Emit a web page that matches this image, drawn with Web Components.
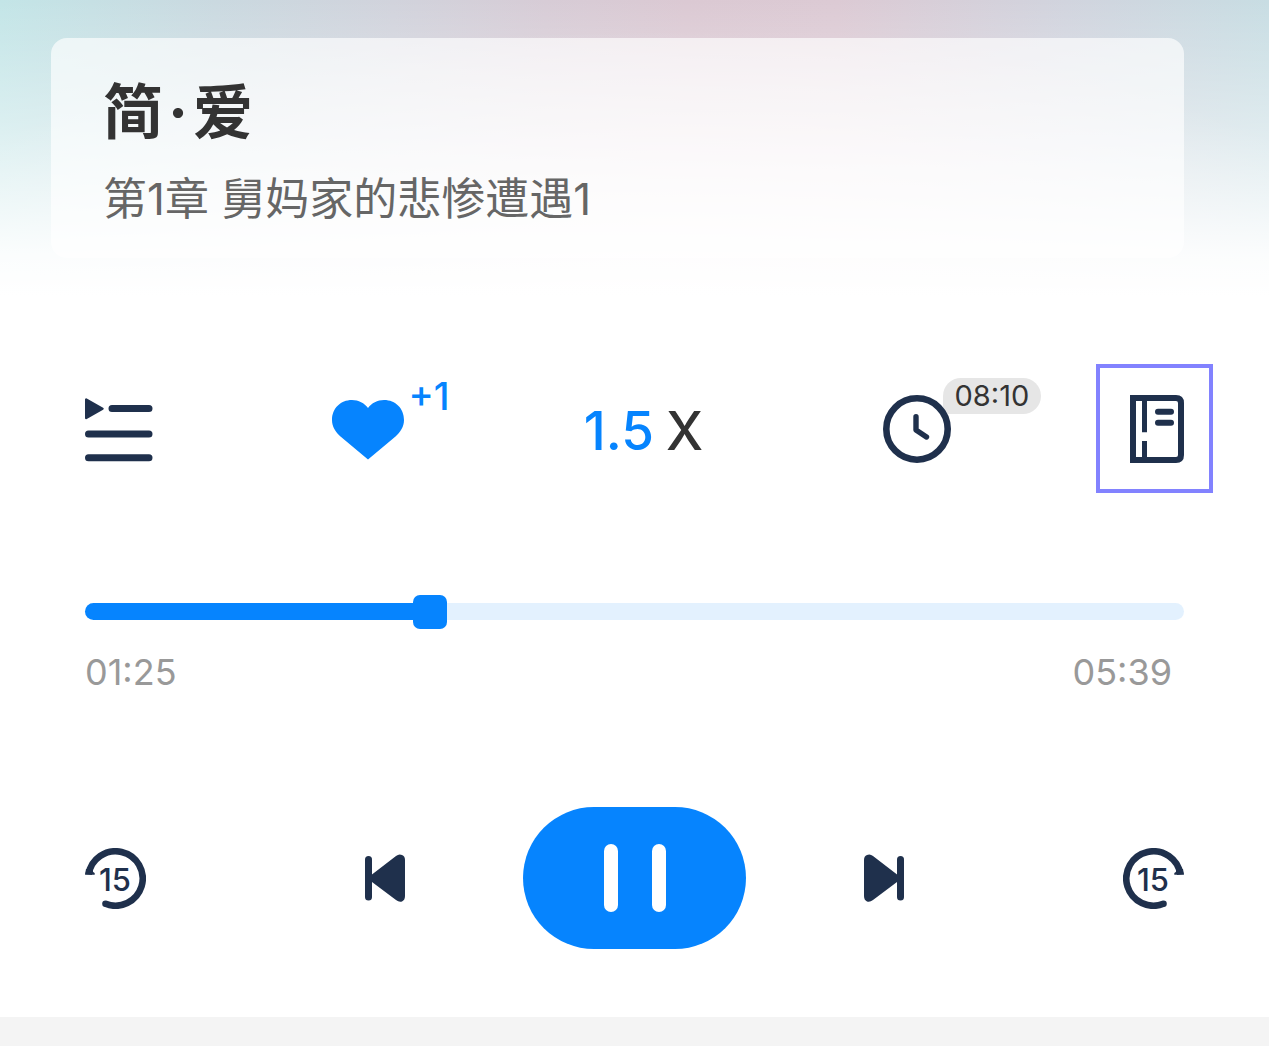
<!DOCTYPE html>
<html lang="zh-CN">
<head>
<meta charset="utf-8">
<meta name="viewport" content="width=device-width, initial-scale=1">
<title>简·爱</title>
<style>
    body {
        margin: 0;
        background: #f4f4f4;
        font-family: Inter, 'Noto Sans CJK SC', sans-serif;
    }
</style>
</head>
<body>
<audio-player></audio-player>

<script>
const icons = {
    list: `<svg width="68" height="68" viewBox="0 0 68 68" fill="none" stroke="currentColor" stroke-width="7" stroke-linecap="round">
        <path d="M1.2 4.5V23L17.5 13.7Z" fill="currentColor" stroke-width="2.4" stroke-linejoin="round"/>
        <path d="M27 13.5H64M3.5 39H64M3.5 62.7H64"/>
    </svg>`,
    heart: `<svg width="72" height="68" viewBox="0 0 72 68" fill="#0684fe">
        <path d="M36 13C39.5 8 45.5 5 52 5C63.5 5 72 13.5 72 25C72 31.5 68.5 37 63.5 41.5L36 64.5L8.5 41.5C3.5 37 0 31.5 0 25C0 13.5 8.5 5 20 5C26.5 5 32.5 8 36 13Z"/>
    </svg>`,
    clock: `<svg width="68" height="68" viewBox="0 0 68 68" fill="none" stroke="currentColor" stroke-linecap="round" stroke-linejoin="round">
        <circle cx="34" cy="34" r="30.7" stroke-width="6.6"/>
        <path d="M33 21.7V35L43.5 42" stroke-width="5.4"/>
    </svg>`,
    book: `<svg width="54" height="68" viewBox="0 0 54 68" fill="none" stroke="currentColor" stroke-width="6">
        <path d="M3 3H46Q51 3 51 8V60Q51 65 46 65H3Z"/>
        <path d="M14.5 3V37.3M14.5 46V65" stroke-width="5"/>
        <path d="M28 16.8H41M28 27.7H41" stroke-linecap="round"/>
    </svg>`,
    back15: `<svg width="61" height="61" viewBox="0 0 61 61">
        <path d="M3.6 26.5A27.2 27.2 0 1 1 20.5 55.8" fill="none" stroke="currentColor" stroke-width="6.6"/>
        <circle cx="20.5" cy="55.7" r="3.3" fill="currentColor"/>
        <path d="M0 26.8L1 21H7.5Q7.5 24 9.7 25V26.8Z" fill="currentColor"/>
        <text x="30" y="43" text-anchor="middle" font-size="31" font-weight="500" fill="currentColor">15</text>
    </svg>`,
    forward15: `<svg width="61" height="61" viewBox="0 0 61 61">
        <path d="M57.4 26.5A27.2 27.2 0 1 0 40.5 55.8" fill="none" stroke="currentColor" stroke-width="6.6"/>
        <circle cx="40.5" cy="55.7" r="3.3" fill="currentColor"/>
        <path d="M61 26.8L60 21H53.5Q53.5 24 51.3 25V26.8Z" fill="currentColor"/>
        <text x="30" y="43" text-anchor="middle" font-size="31" font-weight="500" fill="currentColor">15</text>
    </svg>`,
    previous: `<svg width="40" height="48" viewBox="0 0 40 48" fill="currentColor">
        <rect y="2" width="7" height="44.5" rx="3.5"/>
        <path d="M5 22L31 2Q34 -0.5 37 1Q40 2 40 6V42Q40 46 37 47.5Q34 48.5 31 46L5 26.5Z"/>
    </svg>`,
    next: `<svg width="40" height="48" viewBox="0 0 40 48" fill="currentColor">
        <rect x="33" y="2" width="7" height="44.5" rx="3.5"/>
        <path d="M35 22L9 2Q6 -0.5 3 1Q0 2 0 6V42Q0 46 3 47.5Q6 48.5 9 46L35 26.5Z"/>
    </svg>`,
    pause: `<svg width="62" height="68" viewBox="0 0 62 68" fill="#fff">
        <rect width="14" height="68" rx="7"/>
        <rect x="48" width="14" height="68" rx="7"/>
    </svg>`
};

class TrackInfo extends HTMLElement {
    constructor() {
        super();
        this.attachShadow({mode: 'open'});
        this.shadowRoot.innerHTML = `
            <style>
                :host {
                    display: block;
                    padding: 38px 85px 38px 51px;
                    /* cover colours that fade out into the page */
                    background:
                        linear-gradient(rgba(255, 255, 255, 0), rgba(255, 255, 255, .12) 13%, rgba(255, 255, 255, .4) 42%, rgba(255, 255, 255, .72) 70%, rgba(255, 255, 255, .92) 86%, #fff),
                        radial-gradient(ellipse 60% 80% at 50% 90%, rgba(255, 255, 255, .6), rgba(255, 255, 255, 0)),
                        linear-gradient(90deg, #c3e5e7, #cad9e0 17%, #d1d3dc 31%, #d7ccd6 43%, #dbc9d3 54%, #dccad4 66%, #d1d4de 84%, #c8dde3);
                }
                .card {
                    padding: 30px 52px;
                    border-radius: 16px;
                    background: rgba(255, 255, 255, .65);
                }
                h1 {
                    margin: 0;
                    font-size: 60px;
                    line-height: 88px;
                    font-weight: 700;
                    color: #333;
                }
                p {
                    margin: 14px 0 0;
                    font-size: 44px;
                    line-height: 58px;
                    color: #666;
                }
            </style>
            <div class="card">
                <h1><slot name="title"></slot></h1>
                <p><slot name="chapter"></slot></p>
            </div>
        `;
    }
}
customElements.define('track-info', TrackInfo);

class IconButton extends HTMLElement {
    constructor() {
        super();
        this.attachShadow({mode: 'open'});
        this.shadowRoot.innerHTML = `
            <style>
                :host {
                    display: block;
                    position: relative;
                }
                button {
                    display: flex;
                    align-items: center;
                    justify-content: center;
                    padding: 0;
                    border: 0;
                    background: none;
                    color: #1f304c;
                    font: inherit;
                    cursor: pointer;
                }
                svg {
                    display: block;
                    position: relative;
                    z-index: 1;
                }
                :host([selected]) {
                    margin: 0 -29px 0 -34px;
                }
                :host([selected]) button {
                    padding: 27px 25px 26px 30px;
                    border: 4px solid #8282ff;
                }
                :host([primary]) button {
                    width: 223px;
                    height: 142px;
                    border-radius: 71px;
                    background: #0684fe;
                }
            </style>
            <button type="button"><slot></slot></button>
            <slot name="badge"></slot>
        `;
        this.button = this.shadowRoot.querySelector('button');
    }

    connectedCallback() {
        const icon = icons[this.getAttribute('icon')];
        if (icon) {
            this.button.innerHTML = icon;
        }
        this.button.setAttribute('aria-label', this.getAttribute('label'));
    }
}
customElements.define('icon-button', IconButton);

class SeekBar extends HTMLElement {
    constructor() {
        super();
        this.attachShadow({mode: 'open'});
        this.shadowRoot.innerHTML = `
            <style>
                :host {
                    display: block;
                }
                input {
                    -webkit-appearance: none;
                    appearance: none;
                    display: block;
                    width: 100%;
                    height: 34px;
                    margin: 0;
                    background: none;
                    cursor: pointer;
                }
                input::-webkit-slider-runnable-track {
                    height: 17px;
                    border-radius: 9px;
                    background: linear-gradient(90deg, #0684fe var(--played), #e3f1fe var(--played));
                }
                input::-webkit-slider-thumb {
                    -webkit-appearance: none;
                    width: 34px;
                    height: 34px;
                    margin-top: -8px;
                    border-radius: 7px;
                    background: #0684fe;
                }
                .times {
                    display: flex;
                    justify-content: space-between;
                    padding: 21px 12px 0 0;
                    font-size: 36px;
                    line-height: 46px;
                    color: #999;
                }
            </style>
            <input type="range" min="0" max="1000" aria-label="播放进度">
            <div class="times">
                <slot name="elapsed"></slot>
                <slot name="total"></slot>
            </div>
        `;
        this.input = this.shadowRoot.querySelector('input');
        this.input.addEventListener('input', () => this.paint());
    }

    connectedCallback() {
        this.input.value = this.getAttribute('value');
        this.paint();
    }

    paint() {
        this.input.style.setProperty('--played', this.input.value / 10 + '%');
    }
}
customElements.define('seek-bar', SeekBar);

class AudioPlayer extends HTMLElement {
    constructor() {
        super();
        this.attachShadow({mode: 'open'});
        this.shadowRoot.innerHTML = `
            <style>
                :host {
                    display: block;
                    background: #fff;
                }
                .body {
                    padding: 68px 85px;
                }
                .tools, .transport, .skip {
                    display: flex;
                    align-items: center;
                    justify-content: space-between;
                }
                .skip {
                    gap: 118px;
                }
                seek-bar {
                    margin: 101px 0 112px;
                }
                .dot {
                    margin: 0 5px;
                }
                .speed {
                    padding-top: 4px;
                    font-size: 53px;
                    line-height: 68px;
                    font-weight: 500;
                    color: #333;
                }
                .speed b {
                    margin-right: 12px;
                    font-weight: 500;
                    color: #0684fe;
                }
                .likes {
                    position: absolute;
                    left: 76px;
                    top: -22px;
                    font-size: 38px;
                    line-height: 46px;
                    font-weight: 500;
                    color: #0684fe;
                }
                .timer {
                    position: absolute;
                    left: 60px;
                    top: -17px;
                    padding: 0 12px;
                    border-radius: 18px 18px 18px 0;
                    font-size: 29px;
                    line-height: 36px;
                    color: #333;
                    background: #e6e6e6;
                }
            </style>
            <track-info>
                <span slot="title">简<span class="dot">·</span>爱</span>
                <span slot="chapter">第1章 舅妈家的悲惨遭遇1</span>
            </track-info>
            <div class="body">
                <div class="tools">
                    <icon-button icon="list" label="播放列表"></icon-button>
                    <icon-button icon="heart" label="喜欢"><span class="likes" slot="badge">+1</span></icon-button>
                    <icon-button label="倍速"><span class="speed"><b>1.5</b>X</span></icon-button>
                    <icon-button icon="clock" label="定时"><span class="timer" slot="badge">08:10</span></icon-button>
                    <icon-button icon="book" label="原文" selected></icon-button>
                </div>
                <seek-bar value="308">
                    <span slot="elapsed">01:25</span>
                    <span slot="total">05:39</span>
                </seek-bar>
                <div class="transport">
                    <icon-button icon="back15" label="后退15秒"></icon-button>
                    <div class="skip">
                        <icon-button icon="previous" label="上一章"></icon-button>
                        <icon-button icon="pause" label="暂停" primary></icon-button>
                        <icon-button icon="next" label="下一章"></icon-button>
                    </div>
                    <icon-button icon="forward15" label="前进15秒"></icon-button>
                </div>
            </div>
        `;
    }
}
customElements.define('audio-player', AudioPlayer);
</script>
</body>
</html>
